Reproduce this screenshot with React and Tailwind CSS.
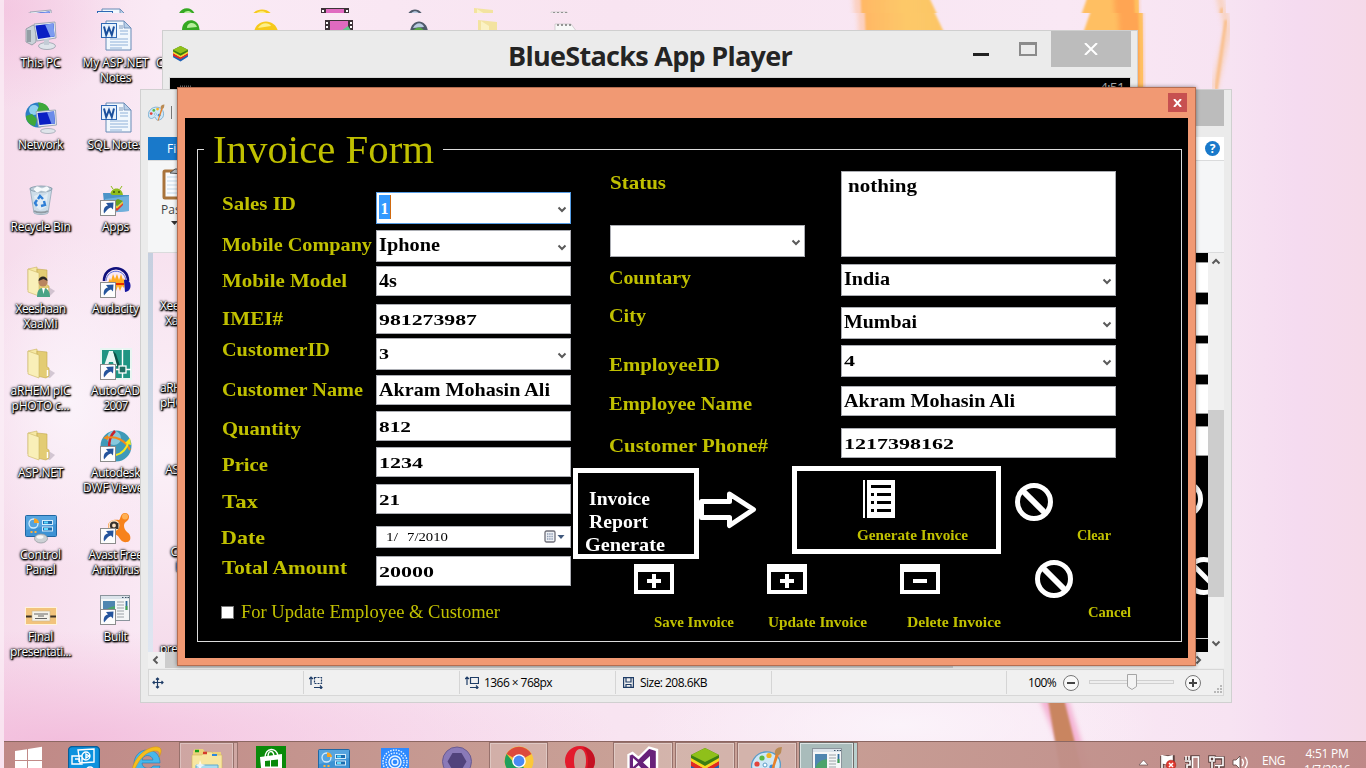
import { useLayoutEffect, useRef, useState } from "react";

/* Text stretched to an exact width, by letter spacing or by horizontal scaling. */
function Fit({ w, scale = false, className = "", children }) {
  const ref = useRef(null);
  const [style, setStyle] = useState(undefined);
  useLayoutEffect(() => {
    const natural = ref.current.getBoundingClientRect().width;
    if (scale) setStyle({ transform: `scaleX(${w / natural})` });
    else setStyle({ letterSpacing: `${(w - natural) / String(children).length}px` });
  }, []);
  return (
    <span ref={ref} style={style} className={`inline-block origin-left whitespace-nowrap ${className}`}>
      {children}
    </span>
  );
}
const Wide = (props) => <Fit scale {...props} />;

/* ---------- icons ---------- */
const svg = "block shrink-0";

function Monitor() {
  return (
    <g>
      <path d="M1 9l7-4 3 2v15l-4 3-6-3z" fill="#c9d2d8" stroke="#7f8b93" strokeWidth=".7" />
      <path d="M3 10v12M5 10v12" stroke="#5f6b73" />
      <path d="M9 4l21-2 1 16-19 3z" fill="#e6ecf3" stroke="#8d99a8" strokeWidth=".8" />
      <path d="M10.500 5.500L28.500 3.500l1 13L13 19z" fill="#0a1fc4" />
      <path d="M20 4.500l8.500-1 1 13-4 .6z" fill="#7c9bf0" />
      <ellipse cx="22" cy="26" rx="8.500" ry="3.500" fill="#dfe4ea" stroke="#8c96a2" strokeWidth=".7" />
      <path d="M19 19h5v6h-5z" fill="#c4ccd6" />
    </g>
  );
}
const Pc = () => (
  <svg className={svg} width="32" height="32" viewBox="0 0 32 32"><Monitor /></svg>
);
const Network = () => (
  <svg className={svg} width="32" height="32" viewBox="0 0 32 32">
    <circle cx="13" cy="13" r="12.500" fill="#2c7fc4" />
    <circle cx="9" cy="8" r="5" fill="#8fd0f0" />
    <path d="M13 .5c6 0 10 3 11 7l-7 5-5-4 2-4zM1 14l6-2 5 5-2 7C4 23 1 19 1 14z" fill="#3fa83b" />
    <path d="M11 9.500L30.500 8l1 15-18 2z" fill="#e6ecf3" stroke="#8d99a8" strokeWidth=".8" />
    <path d="M12.500 11L29 9.500l1 12L14.500 23z" fill="#0a1fc4" />
    <path d="M22 10.200l7-.7 1 12-3.500.4z" fill="#6c8bea" />
    <ellipse cx="23" cy="29" rx="7.500" ry="2.500" fill="#dfe4ea" stroke="#8c96a2" strokeWidth=".6" />
  </svg>
);
const Bin = () => (
  <svg className={svg} width="32" height="32" viewBox="0 0 32 32">
    <path d="M5 4h22l-4 25c-3 2-11 2-14 0z" fill="#cddde9" stroke="#92a7b6" strokeWidth=".8" />
    <ellipse cx="16" cy="5" rx="11" ry="3" fill="#b9cbd8" stroke="#8297a6" strokeWidth=".8" />
    <path d="M8 5l4-3 5 2 5-2 3 3-4 3-5-1-4 2z" fill="#f6fafc" stroke="#a9bac6" strokeWidth=".5" />
    <path d="M9 12l5-2 4 2 5-3-2 14-6 3-4-3z" fill="#eaf2f8" opacity=".7" />
    <path d="M13 15l2-3 3 3M19 17l1 4-4 1M12 22l-2-3 2-3" fill="none" stroke="#2f7fd6" strokeWidth="2.400" />
    <path d="M9 27c3 2 11 2 14 0" fill="none" stroke="#8f9aa2" strokeWidth="2" />
  </svg>
);
function FolderShape() {
  return (
    <g>
      <path d="M22 20l8 5-5 5-8-2z" fill="#8a7f8f" opacity=".35" />
      <path d="M3 3l9-2v27l-9-4z" fill="#f6e8a4" stroke="#c9b25c" strokeWidth=".6" />
      <path d="M12 3l10 1v15l2 1v8l-3 2-9-2z" fill="#e3cc74" stroke="#c2a94f" strokeWidth=".6" />
      <path d="M3 3l11 4v23L3 26z" fill="#f9efb8" stroke="#cbb661" strokeWidth=".6" />
      <path d="M22.500 22v6" stroke="#fff" strokeWidth="1.500" />
    </g>
  );
}
const Folder = () => (
  <svg className={svg} width="32" height="32" viewBox="0 0 32 32"><FolderShape /></svg>
);
const UserFolder = () => (
  <svg className={svg} width="32" height="32" viewBox="0 0 32 32">
    <FolderShape />
    <path d="M12 31c0-6 2-9 6-9s7 3 7 9z" fill="#4aa386" />
    <path d="M17 22h3l-1.500 6z" fill="#fff" />
    <circle cx="18" cy="16" r="4.500" fill="#b98560" />
    <path d="M13.500 15c0-6 9-6 9 0l-4-2z" fill="#2b2624" />
  </svg>
);
const ControlPanel = () => (
  <svg className={svg} width="32" height="32" viewBox="0 0 32 32">
    <rect x=".5" y="3.500" width="31" height="21" rx="1" fill="#3d92d4" stroke="#2067a3" />
    <path d="M1 4h30v8L1 18z" fill="#66b0e6" opacity=".6" />
    <circle cx="8.500" cy="11.500" r="4.500" fill="none" stroke="#d4ecfb" strokeWidth="1.300" />
    <path d="M9 11V6.500a5 5 0 015 4.500z" fill="#f6a323" />
    <rect x="17.500" y="8.500" width="10" height="4" fill="#1c6db0" stroke="#d4ecfb" />
    <rect x="17.500" y="15" width="10" height="4" fill="#1c6db0" stroke="#d4ecfb" />
    <path d="M19 10.500h4M19 17h4" stroke="#5fdcff" strokeWidth="2" />
    <path d="M5.500 20h2M9.500 20h2" stroke="#ffb03a" strokeWidth="2" />
    <ellipse cx="16" cy="26.500" rx="6.500" ry="4.500" fill="#ccd0d4" stroke="#8c9298" strokeWidth=".7" />
    <ellipse cx="15" cy="25" rx="3.500" ry="1.800" fill="#f4f5f6" />
  </svg>
);
const Slide = () => (
  <svg className={svg} width="32" height="32" viewBox="0 0 32 32">
    <rect x=".5" y="13.500" width="31" height="17" fill="#f2c37c" stroke="#fff3dc" />
    <path d="M1 22.500h7M24 22.500h7" stroke="#3d3226" strokeWidth="2" />
    <rect x="7" y="17" width="18" height="10" fill="#f4f2ea" stroke="#c9b58d" strokeWidth=".6" />
    <path d="M9 20h14M13 22h6M10 24.500h12" stroke="#555" strokeWidth=".9" />
  </svg>
);
function WordShape() {
  return (
    <g>
      <path d="M6 1h18l7 7v22H6z" fill="#f1f7fd" stroke="#6789b5" />
      <path d="M24 1v7h7z" fill="#b9cfe8" stroke="#6789b5" strokeWidth=".8" />
      <path d="M20 11h8M20 14h8M10 19h18M10 22h18M10 25h18M10 28h12" stroke="#8fb1d9" />
      <rect x="19" y="5" width="4" height="4" fill="#b8c9dd" />
      <rect x="1.500" y="3.500" width="15" height="14" fill="#e8f2fc" stroke="#2f68b4" />
      <path d="M4 6.500l2.200 8.500L9 8l2.800 7L14 6.500" fill="none" stroke="#1b4f9c" strokeWidth="2" />
    </g>
  );
}
const Word = () => (
  <svg className={svg} width="32" height="32" viewBox="0 0 32 32"><WordShape /></svg>
);
function Shortcut() {
  return (
    <g>
      <rect x=".5" y="16.500" width="15" height="15" fill="#fdfdfd" stroke="#8c8c8c" />
      <path d="M4 29.500c-1-5 1-7.500 4-8l-2-2.500 7.500-.5-.5 7-2-2c-3 .5-4 3-7 6z" fill="#24549c" />
    </g>
  );
}
const Apps = () => (
  <svg className={svg} width="32" height="32" viewBox="0 0 32 32">
    <path d="M10 12c0-10 13-10 13 0z" fill="#8fbc1c" />
    <path d="M11 2l2 3M22 2l-2 3" stroke="#8fbc1c" />
    <circle cx="14" cy="8" r=".8" /><circle cx="19" cy="8" r=".8" />
    <path d="M3 9h7l2 2h17v16l-24 2z" fill="#4c93c8" />
    <path d="M5 15l24-3v15l-22 2z" fill="#6fb0dc" />
    <path d="M12 18l6-3 5 2-6 5z" fill="#6aa31c" /><path d="M12 20l5 4 6-5v2l-6 6-5-4z" fill="#e23a2c" />
    <path d="M12 19l5 3.500 6-5v1.500l-6 5.500-5-3z" fill="#f8d020" />
    <Shortcut />
  </svg>
);
const Audacity = () => (
  <svg className={svg} width="32" height="32" viewBox="0 0 32 32">
    <path d="M8 17l2-5 1 3 2-7 2 5 2-5 2 6 2-6 2 6 1-2 1 4-1 6-2-2-2 5-2-5-2 5-2-6-2 6-2-5-2 3z" fill="#ffab20" />
    <path d="M9 18h15" stroke="#e62c00" strokeWidth="2" />
    <path d="M4 15C4-2 28-2 28 15" fill="none" stroke="#10107c" strokeWidth="2.600" />
    <path d="M6 15C7 2 25 2 26 15" fill="none" stroke="#5468d8" strokeWidth="1" />
    <path d="M24 14c8-2 9 12 1 12z" fill="#1616a0" />
    <Shortcut />
  </svg>
);
const Autocad = () => (
  <svg className={svg} width="32" height="32" viewBox="0 0 32 32">
    <rect width="32" height="32" fill="#e8f5f2" />
    <rect x="2" y="2" width="28" height="28" fill="#1f9583" />
    <path d="M4 18L9 3h4l5 15h-4l-1-4H9l-1 4z" fill="#e9f6f3" />
    <path d="M13 3l3 3 5 15h-3z" fill="#0c4f45" />
    <path d="M22.500 1v29M16 21.500h15" stroke="#fff" strokeWidth="1.400" />
    <rect x="19" y="18" width="7" height="7" fill="#1f6f63" stroke="#fff" strokeWidth="1.300" />
    <Shortcut />
  </svg>
);
const Dwf = () => (
  <svg className={svg} width="32" height="32" viewBox="0 0 32 32">
    <circle cx="16" cy="16" r="15.500" fill="#3f9ab8" />
    <circle cx="14" cy="8" r="7" fill="#a6dcec" opacity=".7" />
    <path d="M15 1c-5 5-6 10-6 18" fill="none" stroke="#c8232c" strokeWidth="2.500" />
    <path d="M6 8c10-3 20 3 24 12" fill="none" stroke="#f28a1c" strokeWidth="2" />
    <path d="M3 8l5-3v5z" fill="#f28a1c" />
    <path d="M16 25c6-1 11-7 12-12" fill="none" stroke="#f6e81c" strokeWidth="2" />
    <path d="M25 13l5-5 1 7z" fill="#f6e81c" />
    <Shortcut />
  </svg>
);
const Avast = () => (
  <svg className={svg} width="32" height="32" viewBox="0 0 32 32">
    <path d="M8 13c1-5 7-6 11-5 2-1 1-7 6-7 5 0 5 6 2 8-4 2-4 7 0 11 5 3 4 10 0 10-5 1-7-3-9-6-4-3-10-4-10-11z" fill="#f7821b" />
    <circle cx="25" cy="4.500" r="3" fill="#ffb054" />
    <circle cx="14" cy="13.500" r="5.500" fill="#fbe2c4" />
    <circle cx="14" cy="13.500" r="3" fill="none" stroke="#38322c" strokeWidth="2.200" />
    <path d="M17.500 11v6" stroke="#38322c" strokeWidth="1.800" />
    <Shortcut />
  </svg>
);
function BuiltShape() {
  return (
    <g>
      <rect x=".5" y=".5" width="29" height="25" fill="#f4f6f7" stroke="#8b949c" />
      <rect x="1" y="1" width="28" height="3" fill="#dbe3ea" />
      <path d="M22 2.500h1.500M25 2.500h1.500M27.500 2.500H29" stroke="#3c5266" />
      <rect x="3" y="6" width="12" height="15" fill="#4f86b0" />
      <path d="M3 21c2-7 6-9 12-10v10z" fill="#4ba36b" />
      <path d="M17 7h7M17 10h7M17 13h7M17 16h7M17 19h7M17 22h7" stroke="#9aa1a6" />
      <path d="M26.500 6v9" stroke="#2f6f9c" strokeWidth="1.800" />
      <path d="M26.500 11v4" stroke="#42a648" strokeWidth="1.800" />
    </g>
  );
}
const Built = () => (
  <svg className={svg} width="32" height="32" viewBox="0 -1 32 32">
    <BuiltShape /><g transform="translate(0 -2)"><Shortcut /></g>
  </svg>
);
const Stacks = ({ size = 32 }) => (
  <svg className={svg} width={size} height={size} viewBox="0 0 32 32">
    <path d="M2 18l14 8 14-8v4l-14 9-14-8z" fill="#1d62b8" />
    <path d="M2 15l14 8 14-8v4l-14 8-14-7z" fill="#e02a22" />
    <path d="M2 11l14 8 14-8v4l-14 8-14-8z" fill="#f9d71d" />
    <path d="M2 9L16 2l14 7v3l-14 8-14-8z" fill="#3c7d12" />
    <path d="M2 9L16 2l14 7-14 7z" fill="#8fc01a" />
  </svg>
);
const Palette = ({ size = 32 }) => (
  <svg className={svg} width={size} height={size} viewBox="0 0 32 32">
    <path d="M14 6C4 7-1 17 1 23c1 5 7 5 9 3 2-3 5-1 5 2 1 4 12 3 14-6C31 12 24 5 14 6z" fill="#cfe7f6" stroke="#5a9cc8" strokeWidth="1.300" />
    <circle cx="11" cy="12" r="2.600" fill="#57b844" /><circle cx="6" cy="18" r="2.600" fill="#e2453c" />
    <circle cx="18" cy="9.500" r="2.600" fill="#f3b321" /><circle cx="14" cy="19" r="2" fill="#fff" stroke="#5a9cc8" />
    <circle cx="21" cy="21" r="2.600" fill="#3d8ed8" />
    <path d="M28 8L20 31l-2 1 1-4 6-21z" fill="#e8812b" />
    <path d="M24 8c-1-4 2-7 7-7-1 4 0 6-3 8z" fill="#b98b54" />
  </svg>
);

/* ---------- desktop ---------- */
const labelShadow =
  "text-white [text-shadow:0_0_2px_#000,1px_1px_2px_#000,0_1px_2px_#000,1px_1px_1px_#000,0_0_3px_#000]";

const columnOne = [
  [Pc, [["This PC", 40]]],
  [Network, [["Network", 45]]],
  [Bin, [["Recycle Bin", 60]]],
  [UserFolder, [["Xeeshaan", 50], ["XaaMi", 34]]],
  [Folder, [["aRHEM pIC", 60], ["pHOTO c...", 58]]],
  [Folder, [["ASP.NET", 45]]],
  [ControlPanel, [["Control", 41], ["Panel", 30]]],
  [Slide, [["Final", 25], ["presentati...", 61]]],
];
const columnTwo = [
  [Word, [["My ASP.NET", 66], ["Notes", 31]]],
  [Word, [["SQL Notes", 56]]],
  [Apps, [["Apps", 27]]],
  [Audacity, [["Audacity", 47]]],
  [Autocad, [["AutoCAD", 49], ["2007", 24]]],
  [Dwf, [["Autodesk", 49], ["DWF Viewer", 65]]],
  [Avast, [["Avast Free", 54], ["Antivirus", 47]]],
  [Built, [["Built", 24]]],
];

function IconColumn({ items }) {
  return (
    <div className="flex w-[75px] flex-col">
      {items.map(([Icon, lines], i) => (
        <div key={i} className="flex h-[82px] flex-col items-center">
          <Icon />
          <div className={`mt-[3px] flex flex-col items-center text-[12px] leading-[15px] ${labelShadow}`}>
            {lines.map(([t, w]) => <Fit key={t} w={w}>{t}</Fit>)}
          </div>
        </div>
      ))}
    </div>
  );
}

function Wallpaper() {
  return (
    <svg className="absolute inset-0" width="1366" height="768" viewBox="0 0 1366 768">
      <defs>
        <linearGradient id="base" x1="0" y1="0" x2="1" y2="0">
          <stop offset="0" stopColor="#f6dcec" />
          <stop offset=".12" stopColor="#faeaf5" />
          <stop offset=".45" stopColor="#f8e4f1" />
          <stop offset=".78" stopColor="#f9e8f4" />
          <stop offset=".9" stopColor="#f7e3f2" />
          <stop offset=".95" stopColor="#f5dbf0" />
          <stop offset="1" stopColor="#f5dae9" />
        </linearGradient>
        <radialGradient id="pinkCorner"><stop offset="0" stopColor="#f2b9da" /><stop offset="1" stopColor="#f2b9da" stopOpacity="0" /></radialGradient>
        <radialGradient id="whiteGlow"><stop offset="0" stopColor="#fbf3fa" /><stop offset="1" stopColor="#fbf3fa" stopOpacity="0" /></radialGradient>
        <linearGradient id="petal" x1="0" y1="0" x2="1" y2="0">
          <stop offset="0" stopColor="#ffb765" /><stop offset=".4" stopColor="#fdc968" /><stop offset="1" stopColor="#fcc163" />
        </linearGradient>
        <filter id="soft"><feGaussianBlur stdDeviation="2.500" /></filter>
        <filter id="tiny"><feGaussianBlur stdDeviation=".8" /></filter>
        <clipPath id="strip"><rect x="0" y="0" width="1366" height="13" /></clipPath>
        <clipPath id="below"><rect x="0" y="13" width="1366" height="755" /></clipPath>
        <g id="petals">
          <path d="M856 -10h24l20 100h-38z" fill="#ffb98b" opacity=".5" filter="url(#soft)" />
          <path d="M864 -10h60l52 110h-108z" fill="url(#petal)" filter="url(#tiny)" />
          <path d="M1098 -10h42v110h-80z" fill="#ffbf62" filter="url(#tiny)" />
          <path d="M1117 -10h24l2 130h-20z" fill="#ffa552" filter="url(#soft)" />
          <path d="M1140 0c4 80 3 160-4 260" fill="none" stroke="#ffc05a" strokeWidth="4" filter="url(#tiny)" />
          <path d="M1222 0l6 30-14 60" fill="none" stroke="#f9c79e" strokeWidth="7" opacity=".6" filter="url(#soft)" />
          <path d="M1226 20l-10 70" fill="none" stroke="#f9bf8a" strokeWidth="3" filter="url(#tiny)" />
        </g>
        <g id="topIcons">
          <path d="M182 30c0-12 15-13 17-3l1 5z" fill="#35a822" /><path d="M187 28c0-6 8-7 10-1z" fill="#b5ef9a" />
          <path d="M254 32c2-14 22-14 24 0z" fill="#f6c91c" /><path d="M258 28c3-6 11-6 13-2z" fill="#fdf08a" />
          <rect x="325" y="20" width="28" height="14" fill="#3d3238" /><rect x="330" y="21" width="18" height="12" fill="#e06ac0" />
          <path d="M338 33l10-7 5 8z" fill="#62c68a" />
          <path d="M327 22v10M351 22v10" stroke="#fff" strokeWidth="2" strokeDasharray="2 2" />
          <path d="M410 32c1-14 17-14 18 0z" fill="#4f5a6a" /><path d="M413 28c3-6 9-6 11-1z" fill="#b9cbe2" />
          <path d="M412 32c4-6 10-6 13 0z" fill="#57a83f" />
          <path d="M478 20l19 2v10h-19z" fill="#f3e3a0" /><path d="M481 21l8 5v6h-8z" fill="#fbf2c4" />
          <path d="M555 24h16l6 8h-22z" fill="#f8f8f8" stroke="#bbb" strokeWidth=".6" />
          <path d="M557 25h14" stroke="#777" strokeWidth="1.500" strokeDasharray="2 2" />
        </g>
      </defs>
      <rect width="1366" height="768" fill="url(#base)" />
      <ellipse cx="0" cy="10" rx="130" ry="100" fill="url(#pinkCorner)" opacity=".6" />
      <ellipse cx="60" cy="740" rx="560" ry="110" fill="url(#pinkCorner)" opacity=".85" />
      <ellipse cx="900" cy="725" rx="260" ry="70" fill="url(#whiteGlow)" />
      <ellipse cx="70" cy="400" rx="110" ry="170" fill="url(#whiteGlow)" />
      <g clipPath="url(#strip)">
        <use href="#petals" transform="translate(-4 -12)" />
        <use href="#topIcons" transform="translate(-4 -12)" />
        <g transform="translate(21 8)"><Monitor /></g>
        <g transform="translate(96 8)"><WordShape /></g>
      </g>
      <g clipPath="url(#below)"><use href="#petals" /><use href="#topIcons" /></g>
      <path d="M1038 695l32 80h22l-25-80z" fill="#f4b4d4" filter="url(#soft)" />
      <path d="M1047 695h16l20 80h-22z" fill="#c98560" filter="url(#tiny)" />
      <rect width="4" height="768" fill="#fbeef6" opacity=".75" />
    </svg>
  );
}

/* ---------- BlueStacks window ---------- */
function BlueStacks() {
  return (
    <div className="absolute left-[162px] top-[30px] h-[180px] w-[976px] border border-[#cfcfcf] bg-[#ebebeb]">
      <div className="flex h-[46px] items-start">
        <div className="pl-[9px] pt-[14px]"><Stacks size={17} /></div>
        <div className="ml-[319px] w-[465px] pt-[5px] font-['Open_Sans'] text-[27px] font-bold leading-[40px] text-[#242424]">
          <Fit w={284}>BlueStacks App Player</Fit>
        </div>
        <div className="mt-[22px] h-[3px] w-[16px] bg-[#222]" />
        <div className="ml-[30px] mt-[11px] h-[14px] w-[18px] border-2 border-t-[3px] border-[#8b8b8b]" />
        <div className="ml-[14px] flex h-[36px] w-[80px] items-center justify-center bg-[#bcbcbc]">
          <svg width="14" height="12" viewBox="0 0 14 12"><path d="M1 0l12 12M13 0L1 12" stroke="#fff" strokeWidth="2" /></svg>
        </div>
      </div>
      <div className="ml-[6px] flex h-[60px] w-[962px] justify-between border border-[#d8d8d8] bg-black px-[6px] pt-[2px] text-[14px] leading-[16px] text-[#aaa]">
        <svg width="20" height="12"><path d="M4 6.500h12" stroke="#777" strokeWidth="2" strokeDasharray="1 1" /></svg>
        <span><Fit w={24}>4:51</Fit></span>
      </div>
    </div>
  );
}

/* ---------- Paint window ---------- */
const Chevron = ({ dir = "down", className = "" }) => {
  const d = { down: "M1.500 2.500L5 6l3.500-3.500", up: "M1.500 6.500L5 3l3.500 3.500", left: "M6.500 1.500L3 5l3.500 3.500", right: "M3.500 1.500L7 5 3.500 8.500" }[dir];
  return (
    <svg className={`block shrink-0 ${className}`} width="10" height="10" viewBox="0 0 10 10">
      <path d={d} fill="none" stroke="#5a5a5a" strokeWidth="2" />
    </svg>
  );
};

function Paint() {
  const ghost = [["Xeesh", "  Xaa"], ["aRHEM", "pHOT"], ["  ASP."], ["    Con", "      P"], ["", "present"]];
  return (
    <div className="absolute left-[140px] top-[89px] flex h-[614px] w-[1092px] flex-col border border-[#d0d0d0] bg-[#ebebeb] px-[7px] pb-[6px]">
      <div className="flex h-[47px] shrink-0 items-start justify-between">
        <div className="flex items-center pt-[14px]"><Palette size={17} /><div className="ml-[6px] h-[13px] w-px bg-[#777]" /></div>
        <div className="h-[36px] w-[60px] bg-[#bcbcbc]" />
      </div>
      <div className="flex h-[24px] shrink-0 items-center justify-between border-b border-[#dadbdc] bg-white">
        <div className="h-[23px] w-[58px] bg-[#1979ca] pl-[19px] text-[12px] leading-[23px] text-white">File</div>
        <div className="mr-[4px] size-[15px] rounded-full bg-[#1979ca] text-center text-[12px] font-bold leading-[15px] text-white">?</div>
      </div>
      <div className="h-[92px] shrink-0 border-b border-[#dadbdc] bg-[#f5f6f7] pl-[14px] pt-[7px] text-[12px] leading-[16px] text-[#444]">
        <svg className="block" width="30" height="32" viewBox="0 0 30 32">
          <rect x="2" y="3" width="26" height="27" rx="1" fill="#f8fbfe" stroke="#a9743c" strokeWidth="3" />
          <path d="M5 9h20M5 13h20M5 17h20M5 21h20M5 25h20" stroke="#c5d9ea" />
          <path d="M8 5l5-4h8v5z" fill="#b9bec4" stroke="#555" />
        </svg>
        <div className="-ml-px mt-[2px]">Paste</div>
        <svg className="ml-[9px] mt-[3px] block" width="7" height="4"><path d="M0 0h7l-3.500 4z" fill="#333" /></svg>
      </div>
      <div className="flex min-h-0 flex-1">
        <div className="w-[5px] bg-gradient-to-b from-[#c5cfdf] to-[#dfe6f1]" />
        <div className="w-[100px] overflow-hidden bg-gradient-to-b from-[#f7e2ef] via-[#fbf1f8] to-[#f5dceb] pl-[7px] pt-[45px]">
          {ghost.map((g, i) => (
            <div key={i} className={`h-[82px] whitespace-pre text-[12px] leading-[15px] tracking-[-0.5px] ${labelShadow}`}>
              {g.map((t, j) => <div key={j} className="h-[15px]">{t}</div>)}
            </div>
          ))}
        </div>
        <div className="flex-1" />
        <div className="flex w-[19px] flex-col overflow-hidden bg-black pt-[9px]">
          <div className="h-[31px] shrink-0 border-y border-[#999] bg-white" />
          <div className="mt-[11px] h-[32px] shrink-0 border-y border-[#999] bg-white" />
          <div className="mt-[7px] h-[32px] shrink-0 border-y border-[#999] bg-white" />
          <div className="mt-[9px] h-[30px] shrink-0 border-y border-[#999] bg-white" />
          <div className="mt-[12px] h-[30px] shrink-0 border-y border-[#999] bg-white" />
          <svg className="block shrink-0" width="19" height="200" viewBox="1188 456 19 200">
            <circle cx="1183" cy="499" r="16.500" fill="none" stroke="#fff" strokeWidth="5" />
            <circle cx="1203" cy="576" r="16.500" fill="none" stroke="#fff" strokeWidth="5" />
            <path d="M1191 564l24 24" stroke="#fff" strokeWidth="5" />
            <path d="M1188 638.500h19" stroke="#ddd" />
          </svg>
        </div>
        <div className="flex w-[16px] flex-col items-center bg-[#f0f0f0] pt-[4px]">
          <Chevron dir="up" />
          <div className="mt-[143px] h-[187px] w-full shrink-0 bg-[#cdcdcd]" />
          <Chevron className="mt-[42px]" />
        </div>
      </div>
      <div className="flex h-[16px] shrink-0 items-center bg-[#f0f0f0]">
        <Chevron dir="left" className="ml-[3px]" />
        <div className="ml-[4px] h-full w-[788px] bg-[#cdcdcd]" />
        <Chevron dir="right" className="ml-[240px]" />
      </div>
      <div className="mt-px flex h-[27px] shrink-0 items-stretch border border-[#d7d7d7] bg-[#f0f0f0] py-px text-[12px] text-black">
        <div className="flex w-[155px] shrink-0 items-center border-r border-[#d5d5d5] pl-[3px]">
          <svg width="12" height="12" viewBox="0 0 12 12" fill="none" stroke="#1e3c66" strokeWidth="1.200"><path d="M5.500 1v10M1 5.500h10M4 2.500L5.500 1 7 2.500M4 9.500L5.500 11 7 9.500M2.500 4L1 5.500 2.500 7M9.500 4L11 5.500 9.500 7" /></svg>
        </div>
        <div className="flex w-[156px] shrink-0 items-center border-r border-[#d5d5d5] pl-[5px]">
          <svg width="14" height="13" viewBox="0 0 14 13" fill="none" stroke="#1e3c66" strokeWidth="1.200"><path d="M2 9V1M0 3l2-2 2 2M5 11.500h8M11 9.500l2 2-2 2" /><path d="M5.500 1.500h7v6h-7z" strokeDasharray="2 1" /></svg>
        </div>
        <div className="flex w-[156px] shrink-0 items-center border-r border-[#d5d5d5] pl-[5px]">
          <svg className="mr-[5px]" width="14" height="13" viewBox="0 0 14 13" fill="none" stroke="#1e3c66" strokeWidth="1.200"><path d="M2 9V1M0 3l2-2 2 2M5 11.500h8M11 9.500l2 2-2 2M5.500 1.500h8v6h-8z" /></svg>
          <Fit w={68}>1366 × 768px</Fit>
        </div>
        <div className="flex w-[156px] shrink-0 items-center border-r border-[#d5d5d5] pl-[7px]">
          <svg className="mr-[6px]" width="11" height="11" viewBox="0 0 11 11" fill="none" stroke="#1e3c66" strokeWidth="1.200"><path d="M.6.600h9.800v9.800H.6zM3 1v4h5V1M3 10V7.500h5V10" /></svg>
          <Fit w={67}>Size: 208.6KB</Fit>
        </div>
        <div className="w-[235px] shrink-0 border-r border-[#d5d5d5]" />
        <div className="flex shrink-0 items-center pl-[21px]">
          <Fit w={28}>100%</Fit>
          <svg className="ml-[6px] block" width="119" height="20" viewBox="1062 673 119 20">
            <circle cx="1071" cy="683" r="7.500" fill="#f8f8f8" stroke="#777" />
            <path d="M1067 683h8" stroke="#444" strokeWidth="2" />
            <rect x="1089.500" y="680.500" width="84" height="3" fill="#eee" stroke="#d0d0d0" />
            <path d="M1127.500 674.500h9v12l-4.500 3-4.500-3z" fill="#f3f3f3" stroke="#a5a5a5" />
          </svg>
          <svg className="ml-[3px] block" width="39" height="22" viewBox="1184 672 39 22">
            <circle cx="1193" cy="683" r="7.500" fill="#f8f8f8" stroke="#777" />
            <path d="M1189 683h8M1193 679v8" stroke="#444" strokeWidth="2" />
            <path d="M1214 692h9M1217 689h6M1220 686h3" stroke="#b8b8b8" strokeWidth="2" strokeDasharray="2 1" />
          </svg>
        </div>
      </div>
    </div>
  );
}

/* ---------- invoice form ---------- */
const label = "h-[24px] text-[19px] font-bold leading-[24px] text-[#c0c000]";

function Box({ cls, text, w, digits = false, combo = false, size = "text-[19px]" }) {
  return (
    <div className={`flex shrink-0 items-start justify-between border border-[#abadb3] bg-white pl-[2px] pr-[3px] font-bold leading-[24px] text-black ${cls}`}>
      <span className={digits ? "pt-[3px] text-[15.5px]" : `pt-[2px] ${size}`}>
        {text && <Wide w={w}>{text}</Wide>}
      </span>
      {combo && <Chevron className="mt-[12px]" />}
    </div>
  );
}

const Ban = () => (
  <svg className={svg} width="38" height="38" viewBox="0 0 38 38" fill="none" stroke="#fff" strokeWidth="5">
    <circle cx="19" cy="19" r="16.500" /><path d="M7.500 7.500l23 23" strokeWidth="6" />
  </svg>
);
const CardIcon = ({ plus }) => (
  <svg className={svg} width="40" height="30" viewBox="0 0 40 30" fill="#fff" shapeRendering="crispEdges">
    <path fillRule="evenodd" d="M0 0h40v30H0zM4 8v18h32V8z" />
    <path d="M13 15h14v4H13z" />
    {plus && <path d="M18 10h4v14h-4z" />}
  </svg>
);
const action = "text-[14.5px] font-bold leading-[20px] text-[#c0c000]";

function InvoiceWindow() {
  return (
    <div className="absolute left-[177px] top-[87px] h-[579px] w-[1019px] border border-[#b56d50] bg-[#f19973] px-[7px] shadow-[0_0_4px_rgba(0,0,0,0.45)]">
      <div className="flex h-[30px] items-start justify-end pt-[5px]">
        <div className="mr-px flex h-[19px] w-[19px] items-center justify-center bg-[#c75050]">
          <svg width="9" height="8" viewBox="0 0 9 8"><path d="M1 0l7 8M8 0L1 8" stroke="#fff" strokeWidth="1.900" /></svg>
        </div>
      </div>
      <div className="flex h-[540px] w-[1003px] flex-col bg-black pl-[12px] pt-[31px] font-['Liberation_Serif',serif]">
        <div className="h-[493px] w-[985px] border border-[#dcdcdc]">
          <div className="-mt-[21px] ml-[6px] h-[40px] w-[239px] bg-black pl-[9px] text-[39px] leading-[42px] text-[#c0c000]">
            <Wide w={221}>Invoice Form</Wide>
          </div>
          <div className="mt-[2px] flex pl-[24px]">
            <div className="mt-[21px] w-[349px]">
              <div className="flex">
                <div className="flex w-[154px] flex-col">
                  <div className={label}><Wide w={74}>Sales ID</Wide></div>
                  <div className={`mt-[17px] ${label}`}><Wide w={150}>Mobile Company</Wide></div>
                  <div className={`mt-[12px] ${label}`}><Wide w={125}>Mobile Model</Wide></div>
                  <div className={`mt-[14px] ${label}`}><Wide w={61}>IMEI#</Wide></div>
                  <div className={`mt-[7px] ${label}`}><Wide w={108}>CustomerID</Wide></div>
                  <div className={`mt-[16px] ${label}`}><Wide w={141}>Customer Name</Wide></div>
                  <div className={`mt-[15px] ${label}`}><Wide w={79}>Quantity</Wide></div>
                  <div className={`mt-[12px] ${label}`}><Wide w={46}>Price</Wide></div>
                  <div className={`mt-[13px] ${label}`}><Wide w={36}>Tax</Wide></div>
                  <div className={`-ml-px mt-[12px] ${label}`}><Wide w={44}>Date</Wide></div>
                  <div className={`mt-[6px] ${label}`}><Wide w={125}>Total Amount</Wide></div>
                </div>
                <div className="flex w-[195px] flex-col">
                  <div className="flex h-[32px] items-start justify-between border border-[#569de5] bg-white pl-[2px] pr-[3px] pt-[2px]">
                    <div className="flex h-[24px] w-[12px] justify-center border-r border-[#d06a10] bg-[#3399ff] pt-[2px] text-[16px] font-bold leading-[24px] text-white">1</div>
                    <Chevron className="mt-[10px]" />
                  </div>
                  <Box cls="mt-[6px] h-[32px]" text="Iphone" w={61} combo />
                  <Box cls="mt-[4px] h-[30px]" text="4s" w={18} size="text-[18px]" />
                  <Box cls="mt-[8px] h-[30px]" text="981273987" w={98} digits />
                  <Box cls="mt-[4px] h-[32px]" text="3" w={10} digits combo />
                  <Box cls="mt-[5px] h-[30px]" text="Akram Mohasin Ali" w={171} />
                  <Box cls="mt-[6px] h-[30px]" text="812" w={32} digits />
                  <Box cls="mt-[6px] h-[30px]" text="1234" w={44} digits />
                  <Box cls="mt-[7px] h-[30px]" text="21" w={21} digits />
                  <div className="mt-[12px] flex h-[22px] items-center border border-[#abadb3] bg-white pl-[9px] text-[11.5px] leading-[20px] text-black">
                    <span className="w-[21px]"><Wide w={12}>1/</Wide></span>
                    <span className="w-[137px]"><Wide w={41}>7/2010</Wide></span>
                    <svg width="22" height="14" viewBox="0 0 22 14">
                      <rect x="1" y="1" width="10" height="11" rx="1.500" fill="#eef1f5" stroke="#6e6e78" strokeWidth="1.300" />
                      <path d="M3 4h6M3 6.500h6M3 9h6" stroke="#8c9ab4" strokeWidth="1.300" strokeDasharray="1.400 .8" />
                      <path d="M13.500 5h7L17 9z" fill="#40587c" />
                    </svg>
                  </div>
                  <Box cls="mt-[8px] h-[30px]" text="20000" w={55} digits />
                </div>
              </div>
              <div className="-ml-px mt-[14px] flex h-[24px] items-center text-[18px] leading-[24px] text-[#c0c000]">
                <div className="mr-[7px] size-[13px] border border-[#777] bg-white" />
                <Wide w={259}>For Update Employee &amp; Customer</Wide>
              </div>
            </div>

            <div className="flex w-[610px] flex-col">
              <div className="flex pl-[39px]">
                <div className="flex w-[231px] flex-col">
                  <div className={label}><Wide w={56}>Status</Wide></div>
                  <Box cls="mt-[30px] h-[32px] w-[195px]" combo />
                  <div className={`-ml-px mt-[9px] ${label}`}><Wide w={82}>Countary</Wide></div>
                  <div className={`-ml-px mt-[14px] ${label}`}><Wide w={37}>City</Wide></div>
                  <div className={`-ml-px mt-[25px] ${label}`}><Wide w={111}>EmployeeID</Wide></div>
                  <div className={`-ml-px mt-[15px] ${label}`}><Wide w={143}>Employee Name</Wide></div>
                  <div className={`-ml-px mt-[18px] ${label}`}><Wide w={159}>Customer Phone#</Wide></div>
                </div>
                <div className="flex w-[275px] flex-col">
                  <div className="h-[86px] border border-[#abadb3] bg-white pl-[6px] pt-[2px] text-[19px] font-bold leading-[24px] text-black"><Wide w={69}>nothing</Wide></div>
                  <Box cls="mt-[7px] h-[32px]" text="India" w={46} combo />
                  <Box cls="mt-[11px] h-[32px]" text="Mumbai" w={73} combo />
                  <Box cls="mt-[6px] h-[32px]" text="4" w={11} digits combo />
                  <Box cls="mt-[9px] h-[30px]" text="Akram Mohasin Ali" w={171} />
                  <Box cls="mt-[12px] h-[30px]" text="1217398162" w={110} digits />
                </div>
              </div>

              <div className="mt-[8px] flex h-[94px] items-start">
                <div className="ml-[2px] mt-[2px] flex h-[91px] w-[126px] shrink-0 flex-col items-start border-[5px] border-white pl-[7px] pt-[14px] text-[19px] font-bold leading-[23px] text-white">
                  <span className="ml-[4px]"><Wide w={61}>Invoice</Wide></span>
                  <span className="ml-[4px]"><Wide w={59}>Report</Wide></span>
                  <span><Wide w={80}>Generate</Wide></span>
                </div>
                <svg className="mt-[25px] block shrink-0" width="58" height="38" viewBox="699 491 58 38">
                  <path d="M701.500 501.500h28V494l24 15.500-24 16v-8h-28z" fill="#000" stroke="#fff" strokeWidth="5" strokeLinejoin="round" />
                </svg>
                <div className="ml-[35px] flex h-[88px] w-[209px] shrink-0 flex-col border-[5px] border-white pl-[60px] pt-[9px]">
                  <svg className="ml-[6px] block" width="32" height="38" viewBox="0 0 32 38" fill="#fff" shapeRendering="crispEdges">
                    <path d="M0 0h2v38H0zM4 0h28v38H4z" />
                    <path d="M8 6.500h20M8 14.500h3M14 14.500h14M8 22.500h3M14 22.500h14M8 30.500h3M14 30.500h14" stroke="#000" strokeWidth="3" />
                  </svg>
                  <div className={`mt-[7px] ${action}`}><Wide w={111}>Generate Invoice</Wide></div>
                </div>
                <div className="ml-[14px] mt-[17px]"><Ban /></div>
                <div className={`ml-[24px] mt-[59px] ${action}`}><Wide w={34}>Clear</Wide></div>
              </div>

              <div className="flex items-start pl-[63px]">
                <div className="w-[133px] pt-[4px]"><CardIcon plus /><div className={`ml-[20px] mt-[18px] ${action}`}><Wide w={80}>Save Invoice</Wide></div></div>
                <div className="w-[133px] pt-[4px]"><CardIcon plus /><div className={`ml-[1px] mt-[18px] ${action}`}><Wide w={99}>Update Invoice</Wide></div></div>
                <div className="w-[135px] pt-[4px]"><CardIcon /><div className={`ml-[7px] mt-[18px] ${action}`}><Wide w={94}>Delete Invoice</Wide></div></div>
                <Ban />
                <div className={`ml-[15px] mt-[42px] ${action}`}><Wide w={43}>Cancel</Wide></div>
              </div>
            </div>
          </div>
        </div>
      </div>
    </div>
  );
}

/* ---------- taskbar ---------- */
const FileExplorer = () => (
  <svg className={svg} width="32" height="32" viewBox="0 0 32 32">
    <path d="M2 5l2-2h8l2 3h16v26H2z" fill="#ecd27a" />
    <path d="M1 9h10l2-3h8l2 3h8v24H1z" fill="#f7e6a0" stroke="#d3b65a" strokeWidth=".6" />
    <path d="M4 5h4" stroke="#18a018" strokeWidth="2.500" /><path d="M12 7h4" stroke="#d63b2a" strokeWidth="2.500" /><path d="M21 9h5" stroke="#2f86dc" strokeWidth="2" />
    <path d="M5 19h22v10H5z" fill="#a8dcf0" stroke="#5fa8cc" /><path d="M9 14l1.500 4 4 1-4 1.500L9 25l-1.500-4.500L4 19l4-1z" fill="#fff" opacity=".8" />
  </svg>
);
const tasks = [
  ["w-[50px]", "", () => (
    <svg className={svg} width="28" height="32" viewBox="0 0 28 32" fill="#fff"><path d="M0 5l12-1.800V14H0zM13 3l14-2.200V14H13zM0 15h12v12L0 25zM13 15h14v14l-14-2z" /></svg>
  )],
  ["w-[60px]", "", () => (
    <svg className={svg} width="32" height="32" viewBox="0 0 32 32" fill="none" stroke="#fff" strokeWidth="1.400"><rect x=".5" y=".5" width="31" height="36" rx="4" fill="#0c92de" stroke="#0a5d96" /><path d="M10 4l16-1v13l-14 1zM4 10h10v8H4zM7 13h4v3M18 6a4 4 0 11-.1 8 4 4 0 01.1-8zM18 8l3 2-3 2z" /><circle cx="22" cy="25" r="4" /></svg>
  )],
  ["w-[65px]", "", () => (
    <svg className={svg} width="32" height="32" viewBox="0 0 32 32"><path d="M16 4c8 0 13 5 13 13H11c0 6 9 7 11 3h7c-2 7-7 11-13 11C8 31 3 25 3 18S8 4 16 4zm-5 10h11c-1-6-10-6-11 0z" fill="#47b7ea" fillRule="evenodd" stroke="#1c7cb8" strokeWidth=".6" /><path d="M2 30C-3 18 14-1 27 1c5 1 3 7 1 10 1-4 0-6-3-6C16 4 5 15 2 30z" fill="#f6be1e" stroke="#cf8d10" strokeWidth=".5" /></svg>
  )],
  ["w-[55px]", "open", FileExplorer],
  ["w-[65px]", "", () => (
    <svg className={svg} width="30" height="32" viewBox="0 0 30 32"><rect width="30" height="36" fill="#0a8a0a" /><path d="M4 11l22-3v26l-20-2z" fill="#fff" /><path d="M9 12c0-11 12-11 13-2M12 11c0-7 5-7 6-1" fill="none" stroke="#fff" strokeWidth="1.500" /><path d="M9 15l5-.6v6H9zM15 14.300l7-.8v7h-7zM9 22h5v6H9zM15 22h7v7h-7z" fill="#0a8a0a" /></svg>
  )],
  ["w-[61px]", "", ControlPanel],
  ["w-[62px]", "", () => (
    <svg className={svg} width="28" height="32" viewBox="0 0 28 32"><rect y="2" width="28" height="32" fill="#2d89ff" /><g fill="none" stroke="#e8f4ff" strokeWidth="1.400" strokeDasharray="1.500 1.200"><circle cx="14" cy="16" r="12" /><circle cx="14" cy="16" r="9" /><circle cx="14" cy="16" r="6" strokeDasharray="none" /><circle cx="14" cy="16" r="3" strokeDasharray="none" /></g></svg>
  )],
  ["w-[62px]", "", () => (
    <svg className={svg} width="30" height="32" viewBox="0 0 30 32"><circle cx="15" cy="15.500" r="14.500" fill="#8a7ab8" stroke="#6b5b8f" /><path d="M10.500 7h9l5 8.500-5 8.500h-9l-5-8.500z" fill="#51437c" /></svg>
  )],
  ["w-[59px]", "open", () => (
    <svg className={svg} width="30" height="32" viewBox="0 0 30 32"><circle cx="15" cy="15" r="14.500" fill="#fbc83a" /><path d="M15 15L2.500 8A14.500 14.500 0 0127.500 8z" fill="#dc4a3d" /><path d="M2.500 8A14.500 14.500 0 0015 29.500l5-8.500-9-3z" fill="#1f9f5c" /><circle cx="15" cy="15" r="6.800" fill="#fff" /><circle cx="15" cy="15" r="5.400" fill="#4a8af4" /></svg>
  )],
  ["w-[64px]", "", () => (
    <svg className={svg} width="30" height="32" viewBox="0 0 30 32"><path d="M15 0c9 0 15 7 15 15s-6 15-15 15S0 23 0 15 6 0 15 0zm0 3c-4 0-6 5-6 12s2 12 6 12 6-5 6-12-2-12-6-12z" fill="#e31b2c" fillRule="evenodd" /><path d="M18 1c7 1 12 7 12 14s-5 13-11 14c5-6 6-21-1-28z" fill="#b00c1c" opacity=".6" /></svg>
  )],
  ["w-[60px]", "open", () => (
    <svg className={svg} width="32" height="32" viewBox="0 0 32 32"><path d="M1.500 9l4-2 6 5L22 1.500l8 2.500v25l-8 3-10.500-11-6 5-4-2z" fill="#68217a" stroke="#fff" strokeWidth="2.400" /><path d="M6 12l5 4.500L6 21zM23 10v13l-7-6.500z" fill="#fff" /></svg>
  )],
  ["w-[60px]", "open", Stacks],
  ["w-[60px]", "open", Palette],
  ["w-[55px]", "active", () => (
    <svg className={svg} width="32" height="32" viewBox="-1 -2 32 32"><BuiltShape /></svg>
  )],
];
const gaps = ["", "", "", "", "", "", "", "", "ml-[1px]", "", "ml-[1px]", "ml-[2px]", "ml-[2px]", "ml-[2px]"];

function Taskbar() {
  return (
    <div className="absolute left-[4px] top-[741px] flex h-[27px] w-[1362px] items-start overflow-hidden border-t border-[#8c6762] bg-gradient-to-r from-[#bd8682]/95 via-[#c79f93]/95 to-[#bb8482]/95">
      {tasks.map(([w, state, Icon], i) => (
        <div key={i} className={`flex ${gaps[i]}`}>
          <div
            className={`flex h-[32px] ${w} shrink-0 items-start justify-center ${
              state === "open" ? "border border-[#97716c] bg-white/20 pt-[3px] shadow-[inset_0_0_0_1px_rgba(255,255,255,0.3)]"
                : state === "active" ? "border border-[#6f6a68] bg-[#a9bcbb] pt-[3px] shadow-[inset_0_0_0_1px_rgba(255,255,255,0.6)]" : "pt-[4px]"
            }`}
          >
            <Icon />
          </div>
          {(i === 3 || i === 13) && <div className={`h-[32px] w-[4px] border border-l-0 border-[#97716c] ${i === 13 ? "bg-[#b9cfcd]" : "bg-white/20"}`} />}
        </div>
      ))}
      <div className="ml-auto flex items-start text-white">
        <svg className="mt-[13px] block" width="112" height="16" viewBox="1138 755 112 16">
          <path d="M1139 765l4.500-5 4.500 5z" fill="#fff" stroke="#6b5050" strokeWidth=".7" />
          <g fill="none" stroke="#59403e" strokeWidth="3.500"><path d="M1162 756v15M1163 757h10v6h-10M1189 757v3M1186 757v3M1185 761h5v5h-3v5M1192 757h6v12h-6zM1210 757h4v4h-4zM1212 762v6M1215 758h8v8h-8M1219 766v4" /></g>
          <g fill="none" stroke="#fff" strokeWidth="1.600"><path d="M1162 755v16" /><path d="M1163 756l5 1 4-1v7l-5 1-4-1z" fill="#fff" /><path d="M1189 756v4M1186 756v4M1185 761h5v4h-3v6" /><rect x="1192.500" y="757" width="6" height="12" fill="#b98885" /><path d="M1210 757h4v4h-4zM1212 762v7M1215 757.500h8v8h-8M1219 766v4M1215 769.500h8" /></g>
          <circle cx="1171" cy="765" r="4.800" fill="#e03a30" stroke="#a01810" strokeWidth=".5" /><path d="M1169 763l4 4M1173 763l-4 4" stroke="#fff" strokeWidth="1.500" />
          <path d="M1233 760h3l4-4v13l-4-4h-3z" fill="#fff" stroke="#59403e" strokeWidth=".8" />
          <path d="M1242 759c1.500 2 1.500 5 0 7M1245 757c3 3 3 8 0 11" fill="none" stroke="#fff" strokeWidth="1.400" />
        </svg>
        <span className="ml-[12px] mt-[11px] w-[42px] text-[12px] leading-[16px]"><Fit w={23}>ENG</Fit></span>
        <span className="mr-[16px] mt-[4px] flex flex-col items-center text-[12px] leading-[16px]">
          <Fit w={43}>4:51 PM</Fit>
          <Fit w={46}>1/7/2016</Fit>
        </span>
      </div>
    </div>
  );
}

export default function App() {
  return (
    <div className="relative h-[768px] w-[1366px] overflow-hidden bg-[#f8e4f1] font-['Open_Sans',sans-serif]">
      <Wallpaper />
      <div className="absolute left-[3px] top-[20px] flex">
        <IconColumn items={columnOne} />
        <IconColumn items={columnTwo} />
        <div className={`ml-[3px] mt-[35px] text-[12px] leading-[15px] ${labelShadow}`}>C</div>
      </div>
      <BlueStacks />
      <Paint />
      <InvoiceWindow />
      <Taskbar />
    </div>
  );
}
